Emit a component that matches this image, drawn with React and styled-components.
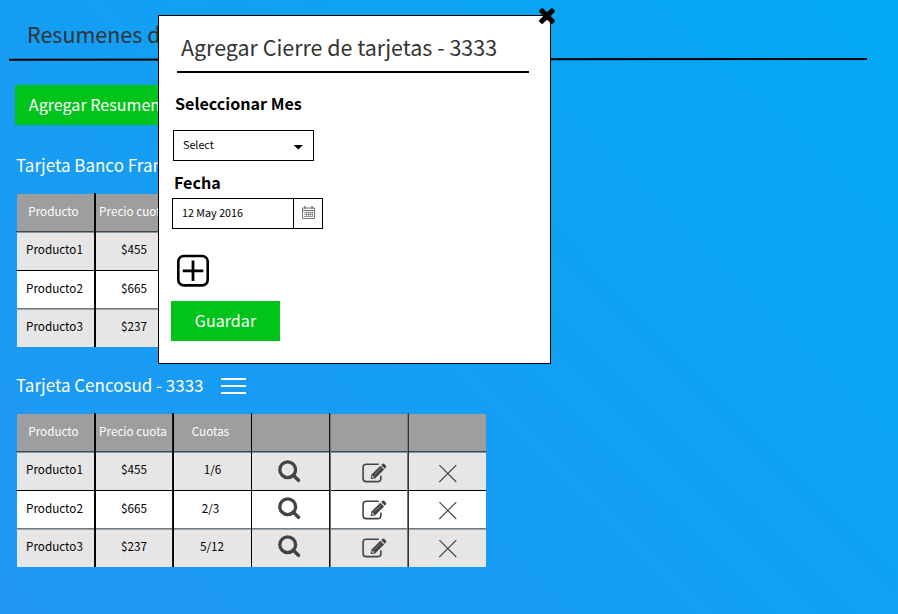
import React from "react";
import styled, { createGlobalStyle } from "styled-components";

const GlobalStyle = createGlobalStyle`
  *, *::before, *::after { box-sizing: border-box; }
  body { margin: 0; font-family: "Noto Sans CJK SC", "Noto Sans", sans-serif; }
  svg { display: block; flex: none; }
`;

const Page = styled.main`
  position: relative;
  width: 898px;
  height: 614px;
  overflow: hidden;
  background: linear-gradient(45deg, #2196f3, #03a9f4);
`;

const PageTitle = styled.h1`
  height: 59px;
  margin: 0;
  padding: 17px 0 0 27px;
  font-size: 21.5px;
  font-weight: 400;
  line-height: 34px;
  color: #333;
  white-space: nowrap;
`;

const PageRule = styled.div`
  width: 858px;
  height: 2px;
  margin-left: 9px;
  background: #000;
  transform: translateY(-0.6px) rotate(-0.06deg);
`;

const Button = styled.button`
  display: block;
  width: ${(p) => p.$width}px;
  height: 40px;
  margin: ${(p) => p.$margin};
  padding: 0 0 1px ${(p) => p.$indent || 0}px;
  border: 0;
  background: #00c41a;
  color: #fff;
  font-family: inherit;
  font-size: 16.1px;
  line-height: 39px;
  white-space: nowrap;
`;

const CardSection = styled.section`
  height: 220px;
  padding-left: 16px;
`;

const CardHeader = styled.div`
  display: flex;
  gap: 17.5px;
  height: 48px;
`;

const CardTitle = styled.h2`
  margin: 0;
  font-size: 17px;
  font-weight: 400;
  line-height: 40px;
  color: #fff;
  white-space: nowrap;
`;

const MenuButton = styled.span`
  display: flex;
  flex-direction: column;
  gap: 4.8px;
  width: 24.5px;
  padding-top: 13px;
`;

const MenuBar = styled.i`
  height: 2.3px;
  background: #fff;
`;

const Table = styled.div`
  width: 470px;
`;

const Row = styled.div`
  display: flex;
  align-items: flex-end;
  height: ${(p) => p.$height}px;
  padding-left: ${(p) => (p.$rule ? 0 : 1)}px;
`;

const Cell = styled.div`
  flex: none;
  width: ${(p) => p.$width}px;
  height: 37px;
  display: flex;
  justify-content: center;
  align-items: flex-start;
  background: ${(p) => p.$fill};
  color: ${(p) => (p.$head ? "#fff" : "#000")};
  font-size: 11.7px;
  line-height: ${(p) => p.$line}px;
  padding: ${(p) => p.$top || 0}px ${(p) => p.$shift || 0}px 0 0;
  white-space: nowrap;
`;

const EditCell = styled(Cell)`
  justify-content: flex-start;
  padding-left: 31px;
`;

const Divider = styled.i`
  flex: none;
  align-self: stretch;
  width: ${(p) => p.$width}px;
  background: linear-gradient(90deg, ${(p) => p.$from} 50%, ${(p) => p.$to} 50%);
`;

const RuleCell = styled.i`
  width: ${(p) => p.$width}px;
  height: 100%;
  background: linear-gradient(180deg, ${(p) => p.$from} 50%, ${(p) => p.$to} 50%);
`;

const Modal = styled.div`
  position: absolute;
  left: 158px;
  top: 15px;
  width: 393px;
  height: 349px;
  border: 1px solid #000;
  background: #fff;
`;

const CloseButton = styled.span`
  position: absolute;
  right: -5px;
  top: -8px;
`;

const ModalTitle = styled.h2`
  width: 352px;
  height: 57px;
  margin: 0 0 0 18px;
  padding: 14px 0 0 4px;
  border-bottom: 2px solid #000;
  font-size: 21.45px;
  font-weight: 400;
  line-height: 33px;
  color: #333;
  white-space: nowrap;
`;

const Label = styled.label`
  display: block;
  margin: ${(p) => p.$margin};
  font-size: 16.1px;
  font-weight: 700;
  line-height: 24px;
  color: #000;
`;

const Select = styled.div`
  display: flex;
  justify-content: space-between;
  width: 141px;
  height: 31px;
  margin: 15px 0 0 14px;
  padding: 0 10px 0 9px;
  border: 1px solid #000;
  font-size: 10.75px;
  line-height: 27px;
`;

const CaretIcon = styled.svg`
  margin-top: 14px;
`;

const DateField = styled.div`
  display: flex;
  width: 151px;
  height: 31px;
  margin: 4px 0 0 13px;
  border: 1px solid #000;
  font-size: 10.75px;
  line-height: 27px;
`;

const DateValue = styled.span`
  flex: 1;
  padding-left: 9px;
`;

const DateButton = styled.span`
  width: 29px;
  padding: 7px 0 0 8px;
  border-left: 1px solid #000;
`;

const AddIcon = styled.svg`
  margin: 25px 0 0 18px;
`;

const ICON = "#444";

const SearchIcon = () => (
  <svg width="23" height="23" viewBox="0 0 23 23" fill="none" stroke={ICON}>
    <circle cx="9.7" cy="9.7" r="7.9" strokeWidth="3.3" />
    <path d="M15.3 15.3L20.5 20.3" strokeWidth="3.5" strokeLinecap="round" />
  </svg>
);

const EditIcon = () => (
  <svg width="25" height="20" viewBox="0 0 25 20" fill="none" stroke={ICON}>
    <path d="M16.8 1.2H4.2Q1.1 1.2 1.1 4.2V15.5Q1.1 18.6 4.2 18.6H15.4Q18.9 18.6 18.9 15.4V12.6" strokeWidth="1.6" />
    <path d="M8.7 16.1L9.5 11.4L18.4 2.7L22.1 6.4L13.1 15.4Z" fill={ICON} stroke="none" />
    <path d="M10.2 14.7L10.6 12.6L12.4 14.4Z" fill="#eee" stroke="none" />
    <path d="M12.5 11.5L19 5.2" stroke="#aaa" strokeWidth=".6" />
    <path d="M19.2 2L20.5 .8Q21.5 .1 22.4 1L24 2.7Q24.8 3.6 23.9 4.5L22.8 5.7Z" fill={ICON} stroke="none" />
  </svg>
);

const RemoveIcon = () => (
  <svg width="18" height="18" viewBox="0 0 18 18" stroke={ICON} strokeWidth="1.1">
    <path d="M.3 0L17.3 17M17.3 0L.3 17" />
  </svg>
);

const CloseIcon = () => (
  <svg width="16" height="16" viewBox="302 366 1188 1188">
    <path d="M1490 1322q0 40-28 68l-136 136q-28 28-68 28t-68-28l-294-294-294 294q-28 28-68 28t-68-28l-136-136q-28-28-28-68t28-68l294-294-294-294q-28-28-28-68t28-68l136-136q28-28 68-28t68 28l294 294 294-294q28-28 68-28t68 28l136 136q28 28 28 68t-28 68l-294 294 294 294q28 28 28 68z" />
  </svg>
);

const CalendarIcon = () => (
  <svg width="13" height="13" viewBox="0 0 13 13" fill="none" stroke="#777">
    <path d="M.5 2H12.5V12.5H.5ZM.5 4.5H12.5" strokeWidth="1" />
    <path d="M3 0V3M10 0V3" strokeWidth="1.5" />
    <path d="M2 6.5H11M2 8.5H11M2 10.5H11M4.5 5.7V11M6.5 5.7V11M8.5 5.7V11M10.5 5.7V11" strokeWidth=".7" />
  </svg>
);

const COLUMNS = [
  { width: 77, divider: [2, "#0b0b0b", "#000"] },
  { width: 76, divider: [2, "#111", "#000"] },
  { width: 77, divider: [1, "#000", "#000"] },
  { width: 77, divider: [2, "#151515", "#707070"] },
  { width: 76, divider: [2, "#777", "#333"] },
  { width: 77 },
];

const HEAD = [
  { text: "Producto", shift: 4 },
  { text: "Precio cuota", shift: 2 },
  { text: "Cuotas", shift: 4 },
  {},
  {},
  {},
];

const PRODUCTS = [
  { cells: ["Producto1", "$455", "1/6"], shifts: [2, 0, 0], fill: "#e6e6e6", line: 32, top: 7, rule: [2, "#43484c", "#8596a3"] },
  { cells: ["Producto2", "$665", "2/3"], shifts: [2, 0, 4], fill: "#fff", line: 34, top: 6, rule: [1, "#000", "#000"] },
  { cells: ["Producto3", "$237", "5/12"], shifts: [2, 0, 1], fill: "#e6e6e6", line: 32, top: 5, rule: [2, "#757a7f", "#9aa6af"] },
];

const ColumnDivider = ({ column }) =>
  column.divider ? (
    <Divider $width={column.divider[0]} $from={column.divider[1]} $to={column.divider[2]} />
  ) : null;

const RowRule = ({ rule }) => (
  <Row $height={rule[0]} $rule>
    {COLUMNS.map((c, i) => (
      <React.Fragment key={i}>
        <RuleCell $width={c.width + (i === 0 ? 1 : 0)} $from={rule[1]} $to={rule[2]} />
        <ColumnDivider column={c} />
      </React.Fragment>
    ))}
  </Row>
);

const ProductTable = ({ installments }) => (
  <Table>
    <Row $height={38}>
      {COLUMNS.map((c, i) => (
        <React.Fragment key={i}>
          <Cell $width={c.width} $fill="#9e9e9e" $head $line={34} $shift={HEAD[i].shift}>
            {i === 2 && !installments ? null : HEAD[i].text}
          </Cell>
          <ColumnDivider column={c} />
        </React.Fragment>
      ))}
    </Row>
    {PRODUCTS.map((p) => {
      const contents = [
        { text: p.cells[0], right: p.shifts[0] },
        { text: p.cells[1], right: p.shifts[1] },
        { text: installments ? p.cells[2] : null, right: p.shifts[2] },
        { icon: <SearchIcon />, right: 2, top: p.top },
        { icon: <EditIcon />, right: 0, top: p.top + 2.7, edge: true },
        { icon: <RemoveIcon />, right: 0, top: p.top + 5 },
      ];
      return (
        <React.Fragment key={p.cells[0]}>
          <RowRule rule={p.rule} />
          <Row $height={37}>
            {COLUMNS.map((c, i) => {
              const item = contents[i];
              const Part = item.edge ? EditCell : Cell;
              return (
                <React.Fragment key={i}>
                  <Part $width={c.width} $fill={p.fill} $line={p.line} $shift={item.right} $top={item.top}>
                    {item.text || item.icon}
                  </Part>
                  <ColumnDivider column={c} />
                </React.Fragment>
              );
            })}
          </Row>
        </React.Fragment>
      );
    })}
  </Table>
);

export default function App() {
  return (
    <Page>
      <GlobalStyle />
      <PageTitle>Resumenes de</PageTitle>
      <PageRule />
      <Button $width={157} $margin="24px 0 20px 15px" $indent={2}>Agregar Resumen</Button>
      <CardSection>
        <CardHeader>
          <CardTitle>Tarjeta Banco Frances</CardTitle>
        </CardHeader>
        <ProductTable />
      </CardSection>
      <CardSection>
        <CardHeader>
          <CardTitle>Tarjeta Cencosud - 3333</CardTitle>
          <MenuButton>
            <MenuBar />
            <MenuBar />
            <MenuBar />
          </MenuButton>
        </CardHeader>
        <ProductTable installments />
      </CardSection>

      <Modal>
        <CloseButton>
          <CloseIcon />
        </CloseButton>
        <ModalTitle>Agregar Cierre de tarjetas - 3333</ModalTitle>
        <Label $margin="18px 0 0 16px">Seleccionar Mes</Label>
        <Select>
          Select
          <CaretIcon width="10" height="5" viewBox="0 0 10 5">
            <path d="M.5 0H10L5.3 4.6Z" />
          </CaretIcon>
        </Select>
        <Label $margin="9px 0 0 15px">Fecha</Label>
        <DateField>
          <DateValue>12 May 2016</DateValue>
          <DateButton>
            <CalendarIcon />
          </DateButton>
        </DateField>
        <AddIcon width="32" height="33" viewBox="0 0 32 33" fill="none" stroke="#000">
          <rect x="1.3" y="2" width="29.4" height="29.4" rx="5.5" strokeWidth="2.6" />
          <path d="M16 6.5V27M5.7 16.8H26.3" strokeWidth="2.8" />
        </AddIcon>
        <Button $width={109} $margin="14px 0 0 12px">Guardar</Button>
      </Modal>
    </Page>
  );
}
